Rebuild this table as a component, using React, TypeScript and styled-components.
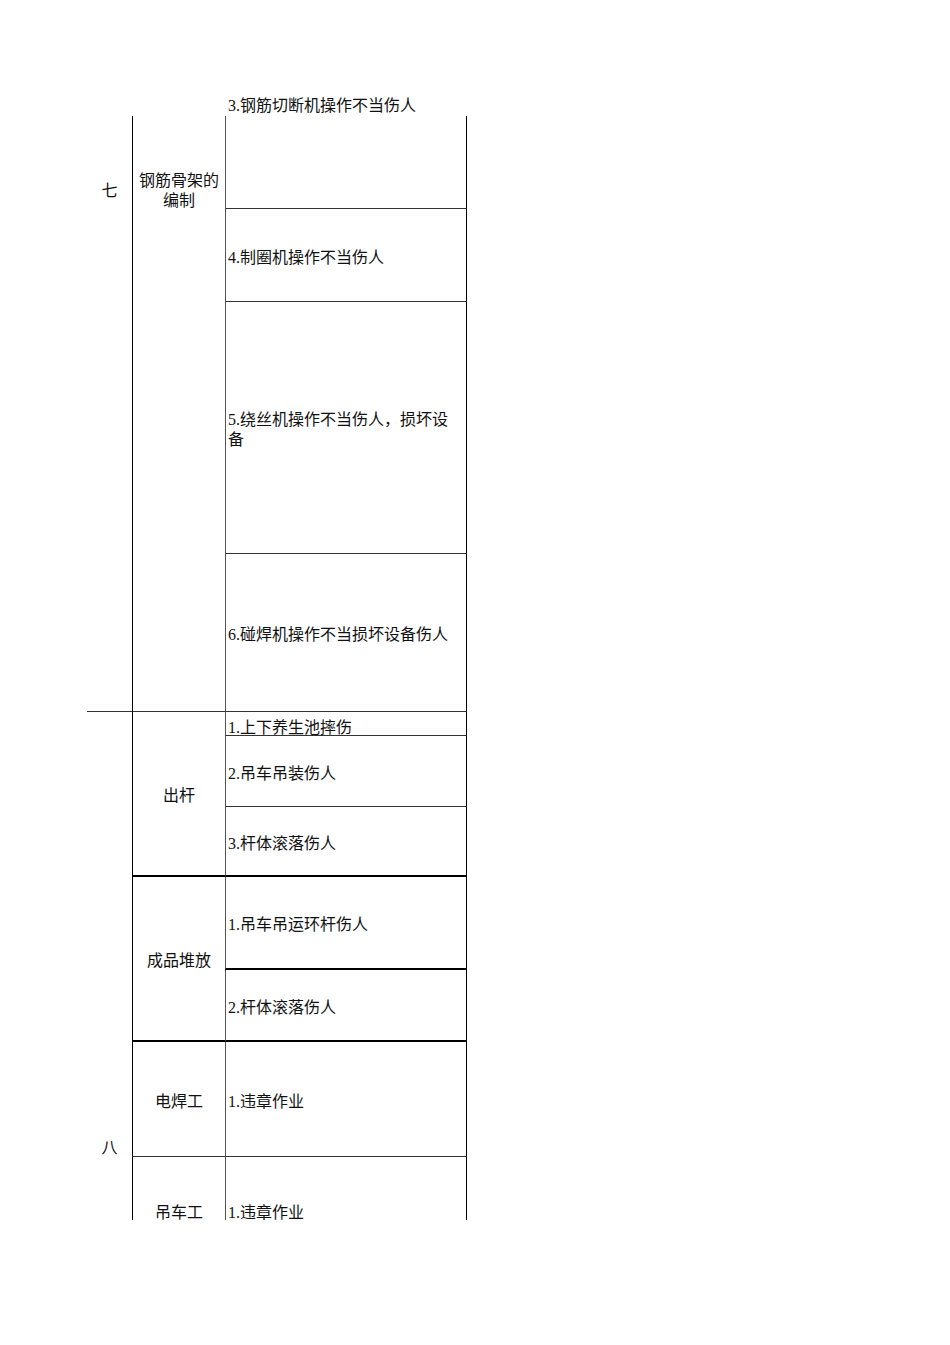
import styled, { createGlobalStyle } from 'styled-components';

const GlobalStyle = createGlobalStyle`
  html, body {
    margin: 0;
    padding: 0;
    background: #fff;
  }
  body {
    font-family: "Liberation Serif", "Noto Sans CJK SC", serif;
    font-size: 16px;
    color: #111;
  }
`;

const Page = styled.div`
  width: 950px;
  height: 1345px;
  padding: 96px 0 0 87px;
  box-sizing: border-box;
`;

const Overflow = styled.div`
  margin-left: 141px;
  line-height: 20px;
  height: 20px;
  white-space: nowrap;
`;

const Sheet = styled.div`
  width: 380px;
  height: 1104px;
  overflow: hidden;
`;

const Grid = styled.div`
  display: grid;
  grid-template-columns: 45px 93px 242px;
  grid-template-rows: 93px 93px 252px 158px 24px 71px 70px 93px 72px 115px 112px 311px;
  line-height: 20px;
`;

type Edge = 'none' | 'thin' | 'thick';

const edge = (e: Edge = 'none') =>
  e === 'thick' ? '2px solid #000' : e === 'thin' ? '1px solid #333' : 'none';

const IndexCell = styled.div<{ $rows: string; $pad: number; $bottom?: Edge }>`
  grid-column: 1;
  grid-row: ${(p) => p.$rows};
  box-sizing: border-box;
  border-bottom: ${(p) => edge(p.$bottom)};
  padding-top: ${(p) => p.$pad}px;
  text-align: center;
`;

const StepCell = styled.div<{ $rows: string; $bottom?: Edge; $top?: boolean; $shift?: number }>`
  grid-column: 2;
  grid-row: ${(p) => p.$rows};
  box-sizing: border-box;
  border-left: 1px solid #000;
  border-bottom: ${(p) => edge(p.$bottom)};
  display: flex;
  align-items: ${(p) => (p.$top ? 'flex-start' : 'center')};
  justify-content: center;
  text-align: center;
  padding: ${(p) => (p.$top ? 55 : p.$shift ?? 5)}px 4px 0;
`;

const HazardCell = styled.div<{ $row: number; $bottom?: Edge; $shift?: number }>`
  grid-column: 3;
  grid-row: ${(p) => p.$row};
  box-sizing: border-box;
  border-left: 1px solid #555;
  border-right: 1px solid #000;
  border-bottom: ${(p) => edge(p.$bottom)};
  display: flex;
  align-items: center;
  padding: ${(p) => p.$shift ?? 5}px 10px 0 2px;
`;

export default function App() {
  return (
    <>
      <GlobalStyle />
      <Page>
        <Overflow>3.钢筋切断机操作不当伤人</Overflow>
        <Sheet>
          <Grid>
            <IndexCell $rows="1 / 5" $pad={65} $bottom="thin">七</IndexCell>
            <IndexCell $rows="5 / 13" $pad={426}>八</IndexCell>

            <StepCell $rows="1 / 5" $top $bottom="thin">钢筋骨架的编制</StepCell>
            <StepCell $rows="5 / 8" $bottom="thick">出杆</StepCell>
            <StepCell $rows="8 / 10" $bottom="thick">成品堆放</StepCell>
            <StepCell $rows="10 / 11" $bottom="thin">电焊工</StepCell>
            <StepCell $rows="11 / 12" $shift={0}>吊车工</StepCell>
            <StepCell $rows="12 / 13" />

            <HazardCell $row={1} $bottom="thin" />
            <HazardCell $row={2} $bottom="thin">4.制圈机操作不当伤人</HazardCell>
            <HazardCell $row={3} $bottom="thin">5.绕丝机操作不当伤人，损坏设备</HazardCell>
            <HazardCell $row={4} $bottom="thin">6.碰焊机操作不当损坏设备伤人</HazardCell>
            <HazardCell $row={5} $bottom="thin" $shift={8}>1.上下养生池摔伤</HazardCell>
            <HazardCell $row={6} $bottom="thin">2.吊车吊装伤人</HazardCell>
            <HazardCell $row={7} $bottom="thick">3.杆体滚落伤人</HazardCell>
            <HazardCell $row={8} $bottom="thick">1.吊车吊运环杆伤人</HazardCell>
            <HazardCell $row={9} $bottom="thick">2.杆体滚落伤人</HazardCell>
            <HazardCell $row={10} $bottom="thin">1.违章作业</HazardCell>
            <HazardCell $row={11} $shift={0}>1.违章作业</HazardCell>
            <HazardCell $row={12} />
          </Grid>
        </Sheet>
      </Page>
    </>
  );
}
